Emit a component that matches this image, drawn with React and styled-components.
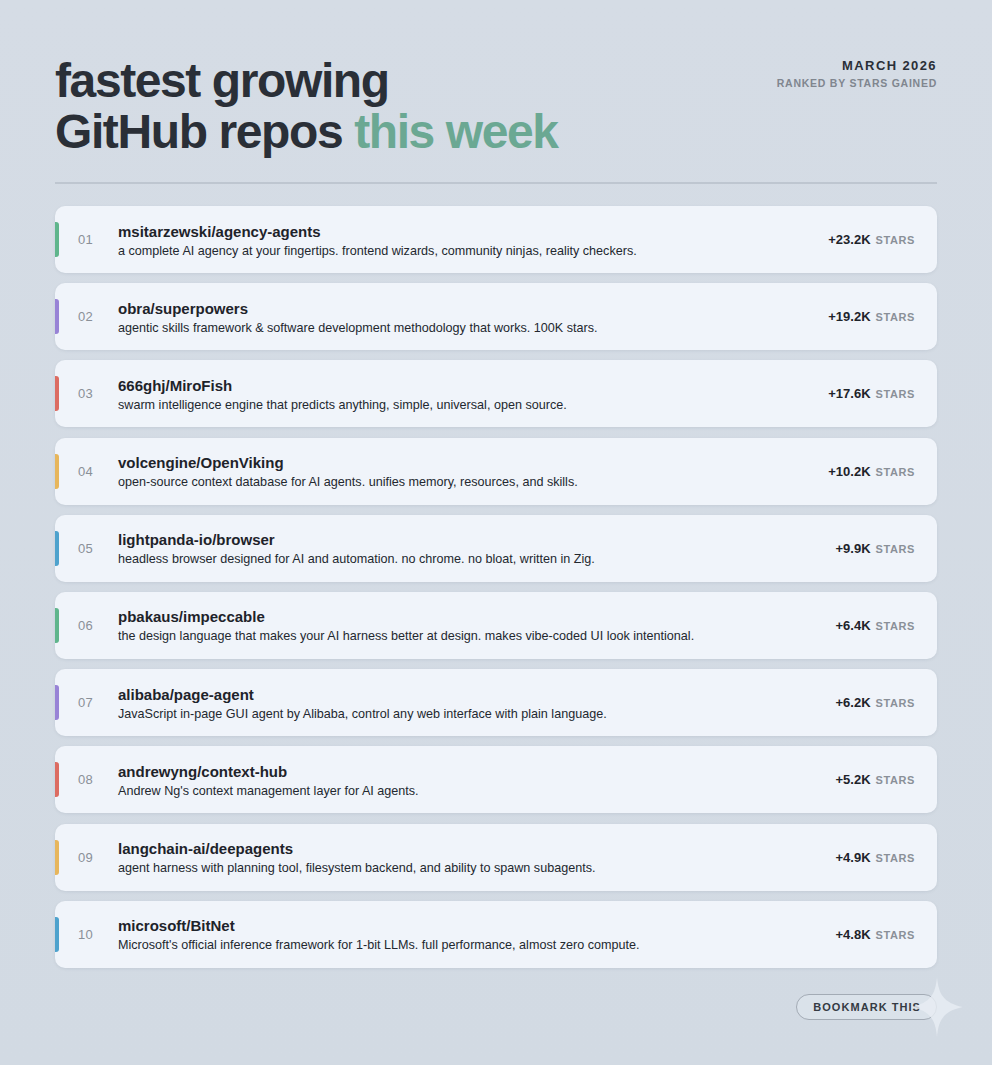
import React from "react";
import styled, { createGlobalStyle } from "styled-components";

const Global = createGlobalStyle`
  html, body { margin: 0; padding: 0; }
  body {
    background: #d3dbe4;
    font-family: "Liberation Sans", Arial, sans-serif;
    -webkit-font-smoothing: antialiased;
  }
`;

const Page = styled.div`
  width: 992px;
  min-height: 1065px;
  box-sizing: border-box;
  padding: 55px 55px 0;
  background: linear-gradient(180deg, #d5dce5 0%, #d2dae3 100%);
`;

const Header = styled.header`
  display: flex;
  justify-content: space-between;
  align-items: flex-start;
  padding-bottom: 25px;
  border-bottom: 2px solid #bec6d0;
`;

const Title = styled.h1`
  margin: 0;
  font-size: 48px;
  line-height: 51px;
  font-weight: 700;
  letter-spacing: -1.4px;
  color: #2a2f37;
`;

const Accent = styled.span`
  color: #6ba893;
`;

const Meta = styled.div`
  text-align: right;
  padding-top: 3px;
`;

const MetaDate = styled.div`
  font-size: 13px;
  font-weight: 700;
  letter-spacing: 1.4px;
  color: #2a2f37;
  line-height: 16px;
`;

const MetaSub = styled.div`
  font-size: 10.5px;
  font-weight: 700;
  letter-spacing: 0.75px;
  color: #80868f;
  line-height: 16px;
  margin-top: 1px;
`;

const List = styled.ol`
  list-style: none;
  margin: 22px 0 0;
  padding: 0;
  display: flex;
  flex-direction: column;
  gap: 10.2px;
`;

const Card = styled.li`
  position: relative;
  height: 67px;
  box-sizing: border-box;
  display: grid;
  grid-template-columns: 40px 1fr auto;
  align-items: center;
  padding: 0 22px 0 23px;
  background: #f0f4fa;
  border-radius: 10px;
  box-shadow: 0 1px 3px rgba(90, 105, 125, 0.12);
  overflow: hidden;
`;

const Bar = styled.span`
  position: absolute;
  left: 0;
  top: 16px;
  width: 4px;
  height: 35px;
  border-radius: 0 3px 3px 0;
  background: ${(p) => p.$color};
`;

const Rank = styled.span`
  font-size: 13px;
  color: #8a9098;
  letter-spacing: 0.2px;
`;

const Info = styled.div`
  display: flex;
  flex-direction: column;
  min-width: 0;
  padding-top: 2px;
`;

const Name = styled.div`
  font-size: 15px;
  font-weight: 700;
  color: #1e232a;
  line-height: 19px;
`;

const Desc = styled.div`
  font-size: 12.6px;
  color: #23282f;
  line-height: 18px;
  margin-top: 1px;
  white-space: nowrap;
`;

const Stars = styled.div`
  display: flex;
  align-items: baseline;
  gap: 5px;
  white-space: nowrap;
`;

const Count = styled.span`
  font-size: 13px;
  font-weight: 700;
  color: #1e232a;
`;

const Unit = styled.span`
  font-size: 11px;
  font-weight: 700;
  letter-spacing: 0.6px;
  color: #8a9098;
`;

const Footer = styled.div`
  display: flex;
  justify-content: flex-end;
  margin-top: 26px;
`;

const ButtonWrap = styled.div`
  position: relative;
`;

const Button = styled.button`
  height: 26px;
  padding: 0 15px 0 16px;
  border: 1px solid #a3abb5;
  border-radius: 13px;
  background: rgba(235, 240, 246, 0.35);
  font-family: "Liberation Sans", Arial, sans-serif;
  font-size: 11px;
  font-weight: 700;
  letter-spacing: 1.05px;
  color: #343a43;
  cursor: pointer;
`;

const Sparkle = styled.svg`
  position: absolute;
  right: -26px;
  top: -17px;
  width: 52px;
  height: 60px;
  pointer-events: none;
`;

const repos = [
  ["msitarzewski/agency-agents", "a complete AI agency at your fingertips. frontend wizards, community ninjas, reality checkers.", "+23.2K", "#5fb58c"],
  ["obra/superpowers", "agentic skills framework & software development methodology that works. 100K stars.", "+19.2K", "#9883d6"],
  ["666ghj/MiroFish", "swarm intelligence engine that predicts anything, simple, universal, open source.", "+17.6K", "#dc6c62"],
  ["volcengine/OpenViking", "open-source context database for AI agents. unifies memory, resources, and skills.", "+10.2K", "#e7b65c"],
  ["lightpanda-io/browser", "headless browser designed for AI and automation. no chrome. no bloat, written in Zig.", "+9.9K", "#4ea2cd"],
  ["pbakaus/impeccable", "the design language that makes your AI harness better at design. makes vibe-coded UI look intentional.", "+6.4K", "#5fb58c"],
  ["alibaba/page-agent", "JavaScript in-page GUI agent by Alibaba, control any web interface with plain language.", "+6.2K", "#9883d6"],
  ["andrewyng/context-hub", "Andrew Ng's context management layer for AI agents.", "+5.2K", "#dc6c62"],
  ["langchain-ai/deepagents", "agent harness with planning tool, filesystem backend, and ability to spawn subagents.", "+4.9K", "#e7b65c"],
  ["microsoft/BitNet", "Microsoft's official inference framework for 1-bit LLMs. full performance, almost zero compute.", "+4.8K", "#4ea2cd"],
];

export default function App() {
  return (
    <>
      <Global />
      <Page>
        <Header>
          <Title>
            fastest growing
            <br />
            GitHub repos <Accent>this week</Accent>
          </Title>
          <Meta>
            <MetaDate>MARCH 2026</MetaDate>
            <MetaSub>RANKED BY STARS GAINED</MetaSub>
          </Meta>
        </Header>
        <List>
          {repos.map(([name, desc, count, color], i) => (
            <Card key={name}>
              <Bar $color={color} />
              <Rank>{String(i + 1).padStart(2, "0")}</Rank>
              <Info>
                <Name>{name}</Name>
                <Desc>{desc}</Desc>
              </Info>
              <Stars>
                <Count>{count}</Count>
                <Unit>STARS</Unit>
              </Stars>
            </Card>
          ))}
        </List>
        <Footer>
          <ButtonWrap>
            <Button>BOOKMARK THIS</Button>
            <Sparkle viewBox="0 0 48 56">
              <path
                d="M24 0 C25.5 16 30 24 48 28 C30 32 25.5 40 24 56 C22.5 40 18 32 0 28 C18 24 22.5 16 24 0 Z"
                fill="#e9eef4"
                opacity="0.8"
              />
            </Sparkle>
          </ButtonWrap>
        </Footer>
      </Page>
    </>
  );
}
